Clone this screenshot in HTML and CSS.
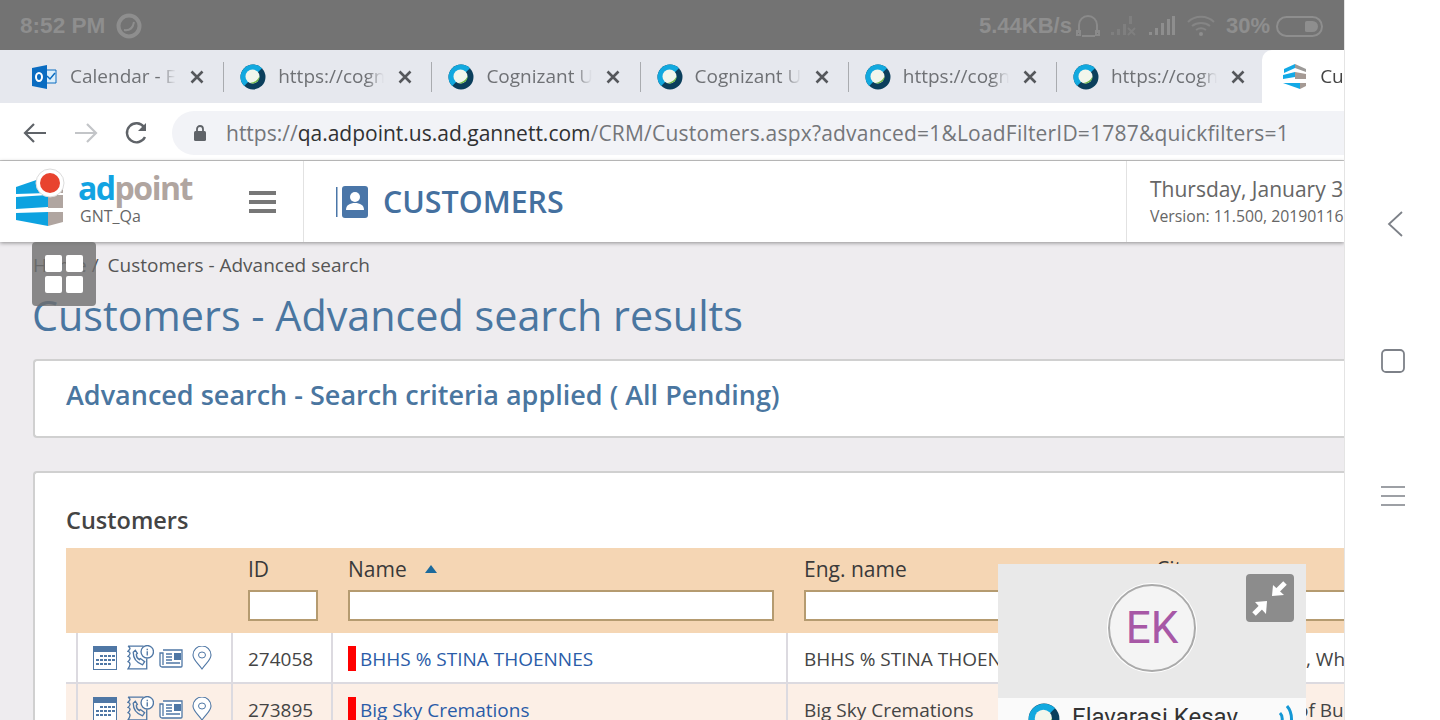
FILE: index.html
```html
<!DOCTYPE html>
<html lang="en">
<head>
  <meta charset="UTF-8" />
  <title>Customers - Advanced search</title>
  <link rel="stylesheet" href="styles.css">
</head>
<body>
  <svg class="defs" width="0" height="0">
    <symbol id="webex" viewBox="0 0 26 26">
      <circle cx="13" cy="13" r="12.500" fill="#0b3f5c"/>
      <path d="M22 4.200A12.500 12.500 0 0 0 4.200 22L13 13z" fill="#12a9df"/>
      <circle cx="12.500" cy="12.500" r="7" fill="#f2f6ec"/>
      <path d="M19.500 12A7 7 0 0 1 10 19C15 18.500 18 16 19.500 12z" fill="#6cb644"/>
    </symbol>
    <symbol id="close" viewBox="0 0 14 14">
      <path d="M1.500 1.500l11 11M12.500 1.500l-11 11" stroke="#55575b" stroke-width="2.600" fill="none"/>
    </symbol>
    <symbol id="cal" viewBox="0 0 24 24">
      <rect x=".5" y=".5" width="23" height="23" fill="#fff" stroke="#4f77a5"/>
      <rect width="24" height="6" fill="#4f77a5"/>
      <path d="M7 9h3v2H7zM11 9h3v2h-3zM15 9h3v2h-3zM19 9h3v2h-3zM3 13h3v2H3zM7 13h3v2H7zM11 13h3v2h-3zM15 13h3v2h-3zM19 13h3v2h-3zM3 17h3v2H3zM7 17h3v2H7zM11 17h3v2h-3zM15 17h3v2h-3z" fill="#4f77a5"/>
    </symbol>
    <symbol id="phone" viewBox="0 0 26 24">
      <path d="M1 1h15M1 1c3 2 2 3 0 5 3 1 2 3 0 5 3 1 2 3 0 5 3 1 2 4 0 7h18v-10" fill="none" stroke="#4f77a5" stroke-width="1.300"/>
      <path d="M6 7c0 6 3 10 9 12l2-3-4-3-1 1c-2-1-3-3-3-5l1-1-2-3z" fill="none" stroke="#4f77a5" stroke-width="1.300"/>
      <circle cx="19.500" cy="6.500" r="6" fill="#fff" stroke="#4f77a5" stroke-width="1.300"/>
      <path d="M19.500 6v4M19.500 3.500v1.500" stroke="#4f77a5" stroke-width="1.300"/>
    </symbol>
    <symbol id="news" viewBox="0 0 24 20">
      <path d="M4 2h19v16a1 1 0 0 1-1 1H3a2 2 0 0 1-2-2V5h3v12" fill="#fff" stroke="#4f77a5" stroke-width="1.300"/>
      <rect x="15" y="5" width="7" height="7" fill="#4f77a5"/>
      <path d="M7 6h6M7 9h6M7 12h6M7 15h14" stroke="#4f77a5" stroke-width="1.300"/>
    </symbol>
    <symbol id="pin" viewBox="0 0 20 24">
      <path d="M10 23C6 17 1 14 1 9a9 9 0 0 1 18 0c0 5-5 8-9 14z" fill="#fff" stroke="#4f77a5" stroke-width="1.100"/>
      <ellipse cx="10" cy="9" rx="3.500" ry="3" fill="none" stroke="#4f77a5"/>
    </symbol>
  </svg>

  <div class="phone">
    <div class="screen">
      <div class="status-bar">
        <div class="status-left">
          <span>8:52 PM</span>
          <svg class="status-webex" width="26" height="26" viewBox="0 0 26 26"><circle cx="13" cy="13" r="10.500" fill="none" stroke="#8e8e8e" stroke-width="4"/><path d="M8 17c6 1 9-2 10-8" fill="none" stroke="#8e8e8e" stroke-width="2"/></svg>
        </div>
        <div class="status-right">
          <span>5.44KB/s</span>
          <svg class="status-headset" width="24" height="24" viewBox="0 0 24 24"><path d="M3 19v-8a9 9 0 0 1 18 0v8M1 17v4h3v-4zM20 17v4h3v-4zM6 22h13" fill="none" stroke="#8a8a8a" stroke-width="2"/></svg>
          <svg width="28" height="22" viewBox="0 0 28 22"><path d="M1 20h3v-3H1zM7 20h3v-6H7zM13 20h3V9h-3zM19 9h3V1h-3z" fill="#7f7f7f"/><path d="M18 13l7 7M25 13l-7 7" stroke="#7f7f7f" stroke-width="2"/></svg>
          <svg width="28" height="22" viewBox="0 0 28 22"><path d="M1 20h3v-3H1zM7 20h3v-7H7zM13 20h3V8h-3zM19 20h3V4h-3zM24 20h3V1h-3z" fill="#8e8e8e"/></svg>
          <svg width="30" height="22" viewBox="0 0 30 22"><path d="M2 7c7-7 19-7 26 0M6 11c5-4 13-4 18 0M10 15c3-2 7-2 10 0" fill="none" stroke="#858585" stroke-width="2"/><circle cx="15" cy="19" r="2" fill="#8e8e8e"/></svg>
          <span>30%</span>
          <span class="battery"><i></i></span>
        </div>
      </div>

      <div class="tab-strip">
        <div class="tab"><svg class="fav" viewBox="0 0 26 26"><path d="M13 6h11v13H13z" fill="#dceefa" stroke="#0a6cc1"/><path d="M15 12l3 3 5-6" fill="none" stroke="#0a6cc1" stroke-width="1.500"/><path d="M0 4l15-3v24L0 22z" fill="#0a6cc1"/><ellipse cx="7" cy="13" rx="3" ry="4" fill="none" stroke="#fff" stroke-width="2"/></svg><span class="tab-title">Calendar - El</span><svg class="tab-close"><use href="#close"/></svg></div>
        <div class="tab"><svg class="fav"><use href="#webex"/></svg><span class="tab-title">https://cogn</span><svg class="tab-close"><use href="#close"/></svg></div>
        <div class="tab"><svg class="fav"><use href="#webex"/></svg><span class="tab-title">Cognizant U</span><svg class="tab-close"><use href="#close"/></svg></div>
        <div class="tab"><svg class="fav"><use href="#webex"/></svg><span class="tab-title">Cognizant U</span><svg class="tab-close"><use href="#close"/></svg></div>
        <div class="tab"><svg class="fav"><use href="#webex"/></svg><span class="tab-title">https://cogn</span><svg class="tab-close"><use href="#close"/></svg></div>
        <div class="tab"><svg class="fav"><use href="#webex"/></svg><span class="tab-title">https://cogn</span><svg class="tab-close"><use href="#close"/></svg></div>
        <div class="tab tab-active">
          <svg class="fav" viewBox="0 0 26 26"><path d="M13 0l11 5v3L13 4z" fill="#9c9a98"/><path d="M13 0L2 5v4l11-5z" fill="#12a9e6"/><path d="M1 11l12-3v5L1 15z" fill="#12a9e6"/><path d="M13 8l11 2v5H13z" fill="#a59a94"/><path d="M1 19l17 6v-6z" fill="#12a9e6"/><path d="M18 25l6-3v-3h-6z" fill="#a59a94"/></svg>
          <span class="tab-title">Customers</span>
        </div>
      </div>

      <div class="toolbar">
        <svg width="26" height="26" viewBox="0 0 26 26"><path d="M24 13H3M12 4l-9 9 9 9" fill="none" stroke="#5f6368" stroke-width="2.200"/></svg>
        <svg width="26" height="26" viewBox="0 0 26 26"><path d="M2 13h21M14 4l9 9-9 9" fill="none" stroke="#c3c5c8" stroke-width="2.200"/></svg>
        <svg width="26" height="26" viewBox="0 0 26 26"><path d="M21 17a9.500 9.500 0 1 1-1-10" fill="none" stroke="#5f6368" stroke-width="2.400"/><path d="M22 3v8h-8z" fill="#5f6368"/></svg>
        <div class="omnibox">
          <svg width="14" height="18" viewBox="0 0 14 18"><path d="M4 8V5a3 3 0 0 1 6 0v3" fill="none" stroke="#5f6368" stroke-width="1.800"/><rect x="1" y="7" width="12" height="10" rx="1.500" fill="#5f6368"/></svg>
          <span class="url"><span class="url-scheme">https://</span><span class="url-host">qa.adpoint.us.ad.gannett.com</span><span class="url-path">/CRM/Customers.aspx?advanced=1&amp;LoadFilterID=1787&amp;quickfilters=1</span></span>
        </div>
      </div>

      <header class="app-header">
        <div class="brand">
          <svg class="brand-mark" width="54" height="64" viewBox="0 0 54 64">
            <path d="M1 19l32-11v17L1 26z" fill="#0da2e0"/>
            <path d="M33 12l15 6v7H33z" fill="#b0a5a0"/>
            <path d="M1 29l32-2v12L1 41z" fill="#0da2e0"/>
            <path d="M33 27h15v13H33z" fill="#b0a5a0"/>
            <path d="M1 45l32-1v14L1 52z" fill="#0da2e0"/>
            <path d="M33 44h15v10l-15 4z" fill="#b0a5a0"/>
            <circle cx="35" cy="15" r="14" fill="#fff" stroke="#dcdcdc"/>
            <circle cx="35" cy="15" r="10" fill="#e8432f"/>
          </svg>
          <div class="brand-text">
            <div class="brand-name"><span class="ad">ad</span><span class="point">point</span></div>
            <div class="brand-env">GNT_Qa</div>
          </div>
          <div class="hamburger"><i></i><i></i><i></i></div>
        </div>
        <div class="page-id">
          <svg width="32" height="34" viewBox="0 0 32 34"><rect y="2" width="1.500" height="30" fill="#4a76a8"/><rect x="6" y="1" width="26" height="32" rx="3" fill="#4a76a8"/><circle cx="19" cy="12" r="5" fill="#fff"/><path d="M10 25c0-5 4-7 9-7s9 2 9 7z" fill="#fff"/></svg>
          <span>CUSTOMERS</span>
        </div>
        <div class="header-info">
          <div class="header-date">Thursday, January 31</div>
          <div class="header-version">Version: 11.500, 20190116</div>
        </div>
      </header>

      <main class="content">
        <div class="breadcrumb"><span class="crumb-home">Home /</span> Customers - Advanced search</div>
        <h1>Customers - Advanced search results</h1>
        <section class="criteria">Advanced search - Search criteria applied ( All Pending)</section>

        <section class="results">
          <h2>Customers</h2>
          <div class="grid">
            <div class="grid-head">
              <div class="cell-action"></div>
              <div class="cell-id"><label>ID</label><input type="text"></div>
              <div class="cell-name"><label>Name <i class="sort"></i></label><input type="text"></div>
              <div class="cell-eng"><label>Eng. name</label><input type="text"></div>
              <div class="cell-city"><label>City</label><input type="text"></div>
            </div>
            <div class="grid-row">
              <div class="cell-action"><span class="actions"><svg class="i-cal"><use href="#cal"/></svg><svg class="i-phone"><use href="#phone"/></svg><svg class="i-news"><use href="#news"/></svg><svg class="i-pin"><use href="#pin"/></svg></span></div>
              <div class="cell-id">274058</div>
              <div class="cell-name"><i class="flag"></i><a>BHHS % STINA THOENNES</a></div>
              <div class="cell-eng">BHHS % STINA THOENNES</div>
              <div class="cell-city">, Wh</div>
            </div>
            <div class="grid-row grid-row-alt">
              <div class="cell-action"><span class="actions"><svg class="i-cal"><use href="#cal"/></svg><svg class="i-phone"><use href="#phone"/></svg><svg class="i-news"><use href="#news"/></svg><svg class="i-pin"><use href="#pin"/></svg></span></div>
              <div class="cell-id">273895</div>
              <div class="cell-name"><i class="flag"></i><a>Big Sky Cremations</a></div>
              <div class="cell-eng">Big Sky Cremations</div>
              <div class="cell-city">of Bu</div>
            </div>
          </div>
        </section>

        <div class="float-grid"><i></i><i></i><i></i><i></i></div>

        <aside class="call-widget">
          <div class="call-video">
            <div class="avatar">EK</div>
            <div class="shrink">
              <svg width="48" height="48" viewBox="0 0 48 48"><path d="M26 22l1-11 11 10z" fill="#fff"/><path d="M31 17l8-8" stroke="#fff" stroke-width="5"/><path d="M21 27l-12 1 11 12z" fill="#fff"/><path d="M15 33l-7 7" stroke="#fff" stroke-width="5"/></svg>
            </div>
          </div>
          <div class="call-name">
            <svg class="fav"><use href="#webex"/></svg>
            <span>Elavarasi Kesav</span>
            <svg class="call-audio" width="16" height="32" viewBox="0 0 16 32"><path d="M2 10c3 3 3 8 0 12M9 3c6 7 6 19 0 26" fill="none" stroke="#1397d5" stroke-width="3"/></svg>
          </div>
        </aside>
      </main>
    </div>

    <nav class="nav-bar">
      <svg class="nav-back" width="20" height="28" viewBox="0 0 20 28"><path d="M16 2L3 14l13 12" fill="none" stroke="#7d8188" stroke-width="1.800"/></svg>
      <svg width="26" height="26" viewBox="0 0 26 26"><rect x="2" y="2" width="22" height="22" rx="4" fill="none" stroke="#7d8188" stroke-width="1.800"/></svg>
      <svg width="26" height="24" viewBox="0 0 26 24"><path d="M1 3h24M1 12h24M1 21h24" fill="none" stroke="#7d8188" stroke-width="1.600"/></svg>
    </nav>
  </div>
</body>
</html>
```

FILE: styles.css
```css
* {
  box-sizing: border-box;
}
html, body {
  margin: 0;
  height: 720px;
  overflow: hidden;
}
body {
  font-family: "Open Sans", Arial, sans-serif;
  color: #444;
  background: #fff;
}
.defs {
  position: absolute;
}
.phone {
  display: flex;
  width: 1440px;
  height: 720px;
}
.screen {
  width: 1344px;
  height: 720px;
  overflow: hidden;
  flex: none;
  display: flex;
  flex-direction: column;
}
.nav-bar {
  flex: 1;
  border-left: 1px solid #e4e4e4;
  display: flex;
  flex-direction: column;
  align-items: center;
  padding-top: 210px;
  gap: 110px;
}
.nav-back {
  margin-left: 6px;
}

/* status bar */
.status-bar {
  flex: none;
  height: 50px;
  background: #737373;
  color: #8e8e8e;
  font-family: "Liberation Sans", Arial, sans-serif;
  font-weight: bold;
  font-size: 22px;
  display: flex;
  justify-content: space-between;
  align-items: center;
  padding: 2px 21px 0 20px;
}
.status-left, .status-right {
  display: flex;
  align-items: center;
}
.status-left {
  font-size: 22.600px;
}
.status-webex {
  margin-left: 11px;
}
.status-right {
  gap: 10px;
}
.status-headset {
  margin-left: -6px;
}
.battery {
  width: 47px;
  height: 21px;
  margin-left: -4px;
  border: 2px solid #8e8e8e;
  border-radius: 11px;
  display: flex;
  justify-content: flex-end;
  padding: 3px;
}
.battery i {
  width: 13px;
  background: #8e8e8e;
  border-radius: 2px 6px 6px 2px;
}

/* browser tabs */
.tab-strip {
  flex: none;
  height: 53px;
  background: #e6e8ee;
  display: flex;
  padding-left: 16px;
  overflow: hidden;
}
.tab {
  flex: none;
  width: 208.200px;
  height: 53px;
  display: flex;
  align-items: center;
  padding-left: 16px;
  position: relative;
  color: #6f7175;
  font-size: 19px;
}
.tab + .tab::before {
  content: "";
  position: absolute;
  left: -1px;
  top: 12px;
  height: 30px;
  width: 1px;
  background: #a9abaf;
}
.tab-active::before {
  display: none;
}
.fav {
  width: 26px;
  height: 26px;
  flex: none;
}
.tab-title {
  width: 106px;
  margin: -1px 0 0 12px;
  overflow: hidden;
  white-space: nowrap;
  -webkit-mask-image: linear-gradient(to right, #000 84%, transparent);
  mask-image: linear-gradient(to right, #000 84%, transparent);
}
.tab-close {
  width: 14px;
  height: 14px;
  margin-left: 14px;
  flex: none;
}
.tab.tab-active {
  width: 120px;
  margin-left: -3px;
  padding-left: 20px;
  background: #fff;
  border-radius: 10px 0 0 0;
  color: #444;
}

/* address bar */
.toolbar {
  flex: none;
  height: 58px;
  background: #fff;
  border-bottom: 1px solid #c8c8c8;
  display: flex;
  align-items: center;
  padding: 2px 0 0 22px;
  gap: 25px;
}
.omnibox {
  flex: 1;
  height: 44px;
  margin-left: -3px;
  background: #f2f3f7;
  border-radius: 22px 0 0 22px;
  display: flex;
  align-items: center;
  padding-left: 21px;
  gap: 19px;
  font-size: 21px;
  white-space: nowrap;
  color: #74767a;
}
.url-host {
  color: #303133;
}
.url-path {
  letter-spacing: 0.200px;
}

/* app header */
.app-header {
  flex: none;
  height: 81px;
  background: #fff;
  box-shadow: 0 1px 4px rgba(0,0,0,0.4);
  display: flex;
  position: relative;
  z-index: 2;
}
.brand {
  width: 304px;
  flex: none;
  border-right: 1px solid #e2e2e2;
  display: flex;
  align-items: center;
  padding-left: 15px;
}
.brand-mark {
  flex: none;
  margin-top: -4px;
}
.brand-text {
  margin: 0 0 8px 11px;
  width: 169px;
}
.brand-name {
  margin-left: -2px;
  font-size: 32px;
  font-weight: bold;
  line-height: 36px;
  letter-spacing: -1.500px;
}
.ad {
  color: #12a3e2;
}
.point {
  color: #b0a5a0;
}
.brand-env {
  font-size: 16px;
  line-height: 20px;
  color: #666;
}
.hamburger {
  width: 27px;
  display: flex;
  flex-direction: column;
  gap: 5px;
}
.hamburger i {
  height: 4px;
  background: #777;
}
.page-id {
  flex: 1;
  display: flex;
  align-items: center;
  padding-left: 32px;
  gap: 15px;
  font-size: 30.400px;
  font-weight: 600;
  color: #44709f;
}
.header-info {
  width: 218px;
  flex: none;
  border-left: 1px solid #e2e2e2;
  padding: 15px 0 0 23px;
  white-space: nowrap;
  overflow: hidden;
}
.header-date {
  font-size: 21px;
  line-height: 27px;
  color: #666;
}
.header-version {
  font-size: 15.800px;
  line-height: 26px;
  color: #666;
}

/* page */
.content {
  flex: 1;
  min-height: 0;
  position: relative;
  background: #eeecef;
  padding: 10px 0 0 33px;
}
.breadcrumb {
  font-size: 19px;
  line-height: 26px;
  color: #555;
}
.crumb-home {
  margin-right: 4px;
}
h1 {
  margin: 10px 0 0 -1px;
  font-size: 41.300px;
  line-height: 54px;
  font-weight: 400;
  color: #4a76a0;
}
.criteria {
  height: 79px;
  margin-top: 17px;
  background: #fff;
  border: 2px solid #d0d0d0;
  border-right: none;
  border-radius: 4px 0 0 4px;
  padding-left: 31px;
  font-size: 27px;
  font-weight: 600;
  line-height: 68px;
  color: #4a76a0;
}
.results {
  margin-top: 33px;
  background: #fff;
  border: 2px solid #d0d0d0;
  border-right: none;
  border-radius: 4px 0 0 0;
  padding: 31px 0 0 31px;
  height: 300px;
}
h2 {
  margin: 0;
  font-size: 23.500px;
  line-height: 32px;
  font-weight: 600;
  color: #444;
}
.grid {
  margin-top: 12px;
  width: 1400px;
}
.grid-head, .grid-row {
  display: grid;
  grid-template-columns: 167px 100px 455px 352px 1fr;
}
.grid-head {
  height: 85px;
  background: #f5d6b4;
  padding-top: 7px;
  font-size: 21px;
  font-weight: 500;
  color: #3a3a3a;
}
.grid-head label {
  display: block;
  height: 28px;
  line-height: 28px;
}
.grid-head input {
  display: block;
  height: 31px;
  margin-top: 7px;
  background: #fff;
  border: 2px solid #b59b70;
  outline: none;
  padding: 0;
}
.cell-id input {
  width: 70px;
}
.cell-name input {
  width: 426px;
}
.cell-eng input {
  width: 320px;
}
.cell-city input {
  width: 300px;
}
.grid-head > div {
  padding-left: 15px;
}
.grid-head > .cell-eng, .grid-head > .cell-city {
  padding-left: 16px;
}
.sort {
  display: inline-block;
  margin: 0 0 4px 13px;
  border: 6px solid transparent;
  border-top: none;
  border-bottom: 8px solid #1c6a9c;
}
.grid-row {
  height: 51px;
  font-size: 19px;
  background: #fff;
  border-bottom: 2px solid #dcdae0;
  white-space: nowrap;
}
.grid-row-alt {
  background: #fcefe6;
}
.grid-row > div {
  padding: 2px 0 0 15px;
  border-right: 2px solid #dcdae0;
  display: flex;
  align-items: center;
  overflow: hidden;
}
.grid-row > .cell-eng, .grid-row > .cell-city {
  padding-left: 16px;
  border-right: none;
}
.grid-row > .cell-action {
  padding: 0 0 0 15px;
  margin-left: 10px;
  border-left: 2px solid #dcdae0;
}
.grid-row > .cell-city {
  padding-left: 166px;
}
.grid-row-alt > .cell-city {
  padding-left: 157px;
}
.actions {
  display: flex;
  align-items: center;
  gap: 9px;
}
.i-cal {
  width: 24px;
  height: 24px;
}
.i-phone {
  width: 27px;
  height: 25px;
  margin-left: 1px;
}
.i-news {
  width: 24px;
  height: 20px;
  margin-left: -4px;
}
.i-pin {
  width: 20px;
  height: 24px;
}
.flag {
  width: 8px;
  height: 25px;
  background: #f00;
  margin-right: 4px;
  flex: none;
}
.grid-row a {
  color: #2a5ca8;
}

/* overlays */
.float-grid {
  position: absolute;
  left: 32px;
  top: 0;
  width: 64px;
  height: 64px;
  border-radius: 4px;
  background: rgba(110,110,110,0.8);
  display: grid;
  grid-template-columns: 17px 17px;
  grid-template-rows: 17px 17px;
  gap: 4px;
  place-content: center;
  z-index: 3;
}
.float-grid i {
  background: #fff;
  border-radius: 2px;
}
.call-widget {
  position: absolute;
  left: 998px;
  top: 322px;
  width: 308px;
  height: 170px;
  background: #fafafa;
  overflow: hidden;
}
.call-video {
  height: 134px;
  padding-bottom: 6px;
  background: #e9e9e9;
  position: relative;
  display: flex;
  justify-content: center;
  align-items: center;
}
.avatar {
  width: 88px;
  height: 88px;
  border-radius: 50%;
  background: #f4f4f4;
  border: 2px solid #aaa;
  box-shadow: 0 0 0 1px #fff;
  color: #a758a6;
  font-family: Roboto, sans-serif;
  font-size: 44px;
  display: flex;
  align-items: center;
  justify-content: center;
}
.shrink {
  position: absolute;
  top: 10px;
  right: 12px;
  width: 48px;
  height: 48px;
  border-radius: 4px;
  background: #8c8c8c;
}
.call-name {
  display: flex;
  align-items: flex-start;
  padding: 5px 0 0 30px;
  font-family: Roboto, sans-serif;
  font-size: 24px;
  color: #333;
}
.call-name .fav {
  width: 32px;
  height: 32px;
}
.call-name span {
  margin-left: 12px;
  width: 206px;
  line-height: 28px;
  white-space: nowrap;
}
```
